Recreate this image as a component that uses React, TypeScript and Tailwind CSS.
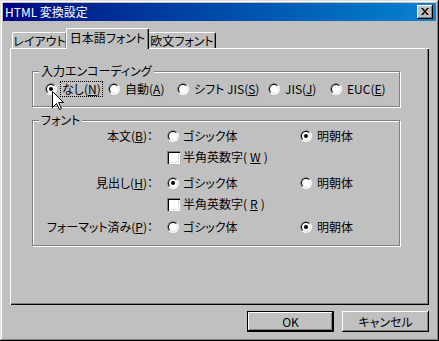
import React from "react";

const FONT = "font-['Noto_Sans_CJK_JP','Liberation_Sans',sans-serif]";

function Radio({ checked }: { checked?: boolean }) {
  return (
    <svg width="12" height="12" viewBox="0 0 12 12" className="shrink-0">
      <defs>
        <clipPath id="radio-tl">
          <polygon points="0,0 12,0 0,12" />
        </clipPath>
      </defs>
      <circle cx="6" cy="6" r="6" fill="#fff" />
      <circle cx="6" cy="6" r="6" fill="#808080" clipPath="url(#radio-tl)" />
      <circle cx="6" cy="6" r="5" fill="#dfdfdf" />
      <circle cx="6" cy="6" r="5" fill="#000" clipPath="url(#radio-tl)" />
      <circle cx="6" cy="6" r="4" fill="#fff" />
      {checked && <circle cx="6" cy="6" r="2" fill="#000" />}
    </svg>
  );
}

function Checkbox() {
  return (
    <span className="block w-[13px] h-[13px] shrink-0 bg-white shadow-[inset_1px_1px_#808080,inset_2px_2px_#000,inset_-1px_-1px_#fff,inset_-2px_-2px_#dfdfdf]" />
  );
}

function Key({ label, k, after = "" }: { label: string; k: string; after?: string }) {
  return (
    <>
      {label}(<u>{k}</u>){after}
    </>
  );
}

function Group({ title, className, children }: { title: string; className: string; children: React.ReactNode }) {
  return (
    <div className={`relative w-[368px] border border-[#808080] shadow-[1px_1px_#fff,inset_1px_1px_#fff] ${className}`}>
      <span className="absolute left-[6px] top-[-9px] px-[2px] bg-[#c0c0c0] leading-[16px]">{title}</span>
      {children}
    </div>
  );
}

const encodings = [
  { label: "なし", k: "N", w: "w-[63px]", checked: true, focus: true },
  { label: "自動", k: "A", w: "w-[69px]" },
  { label: "シフト JIS", k: "S", w: "w-[91px]" },
  { label: "JIS", k: "J", w: "w-[62px]" },
  { label: "EUC", k: "E", w: "w-[60px]" },
];

const fontRows = [
  { label: "本文", k: "B", gothic: false, check: "W", top: "mt-[7px]" },
  { label: "見出し", k: "H", gothic: true, check: "R", top: "mt-[10px]" },
  { label: "フォーマット済み", k: "P", gothic: false, top: "mt-[7px]" },
];

export default function App() {
  return (
    <div
      className={`relative w-[439px] h-[341px] p-[3px] bg-[#c0c0c0] text-black text-[12px] leading-[16px] [font-feature-settings:'palt'] ${FONT} shadow-[inset_-1px_-1px_#000,inset_1px_1px_#dfdfdf,inset_-2px_-2px_#808080,inset_2px_2px_#fff]`}
    >
      {/* title bar */}
      <div className="h-[18px] flex items-center justify-between pl-[2px] pr-[3px] bg-gradient-to-r from-[#000080] to-[#1084d0]">
        <span className="text-white">HTML 変換設定</span>
        <button className="w-[16px] h-[14px] flex items-center justify-center bg-[#c0c0c0] shadow-[inset_-1px_-1px_#000,inset_1px_1px_#fff,inset_-2px_-2px_#808080]">
          <svg width="8" height="7" viewBox="0 0 8 7" className="mb-px">
            <path d="M0 0h2l2 2.5 2-2.5h2L5 3.5 8 7H6L4 4.5 2 7H0l3-3.5z" fill="#000" />
          </svg>
        </button>
      </div>

      {/* body */}
      <div className="px-[7px] pt-[7px]">
        <div className="relative z-10 flex items-end pl-[2px] -mb-px">
          <div className="w-[54px] h-[16px] mb-px flex items-center justify-center border-l border-t border-white rounded-tl-[2px] shadow-[inset_-1px_0_#808080]">
            レイアウト
          </div>
          <div className="w-[83px] h-[21px] pb-[3px] flex items-center justify-center bg-[#c0c0c0] border-l border-t border-white border-r border-r-black rounded-t-[2px] shadow-[inset_-1px_0_#808080]">
            日本語フォント
          </div>
          <div className="w-[67px] h-[16px] mb-px flex items-center justify-center border-t border-white border-r border-r-black rounded-tr-[2px] shadow-[inset_-1px_0_#808080]">
            欧文フォント
          </div>
        </div>

        {/* tab panel */}
        <div className="w-[419px] h-[257px] pl-[22px] pt-[23px] shadow-[inset_1px_1px_#fff,inset_-1px_-1px_#000,inset_-2px_-2px_#808080]">
          <Group title="入力エンコーディング" className="h-[36px] pt-[9px] pl-[12px]">
            <div className="flex items-center h-[16px]">
              {encodings.map((e) => (
                <div key={e.k} className={`flex items-center ${e.w}`}>
                  <Radio checked={e.checked} />
                  <span
                    className={`ml-[3px] px-[1px] h-[16px] leading-[14px] border ${
                      e.focus ? "border-dotted border-black" : "border-transparent"
                    }`}
                  >
                    <Key label={e.label} k={e.k} />
                  </span>
                </div>
              ))}
            </div>
          </Group>

          <Group title="フォント" className="h-[126px] mt-[13px]">
            {fontRows.map((r) => (
              <div key={r.k} className={r.top}>
                <div className="flex items-center h-[16px]">
                  <div className="w-[120px] text-right">
                    <Key label={r.label} k={r.k} after="：" />
                  </div>
                  <div className="ml-[14px] w-[133px] flex items-center gap-[4px]">
                    <Radio checked={r.gothic} />
                    <span>ゴシック体</span>
                  </div>
                  <div className="flex items-center gap-[5px]">
                    <Radio checked={!r.gothic} />
                    <span>明朝体</span>
                  </div>
                </div>
                {r.check && (
                  <div className="flex items-center h-[16px] mt-[5px] ml-[134px] gap-[3px]">
                    <Checkbox />
                    <Key label="半角英数字" k={r.check} />
                  </div>
                )}
              </div>
            ))}
          </Group>
        </div>

        {/* buttons */}
        <div className="flex justify-end gap-[8px] mt-[6px]">
          <button className="w-[87px] h-[21px] flex items-center justify-center border border-black shadow-[inset_-1px_-1px_#000,inset_1px_1px_#fff,inset_-2px_-2px_#808080]">
            OK
          </button>
          <button className="w-[87px] h-[21px] flex items-center justify-center shadow-[inset_-1px_-1px_#000,inset_1px_1px_#fff,inset_-2px_-2px_#808080]">
            キャンセル
          </button>
        </div>
      </div>

      {/* mouse pointer */}
      <svg width="12" height="19" viewBox="0 0 12 19" className="absolute left-[52px] top-[91px]">
        <path d="M0.5 0.5V16.5L4.5 12.5L7.5 18.5L9.5 17.5L6.5 11.5H11.5Z" fill="#fff" stroke="#000" />
      </svg>
    </div>
  );
}
